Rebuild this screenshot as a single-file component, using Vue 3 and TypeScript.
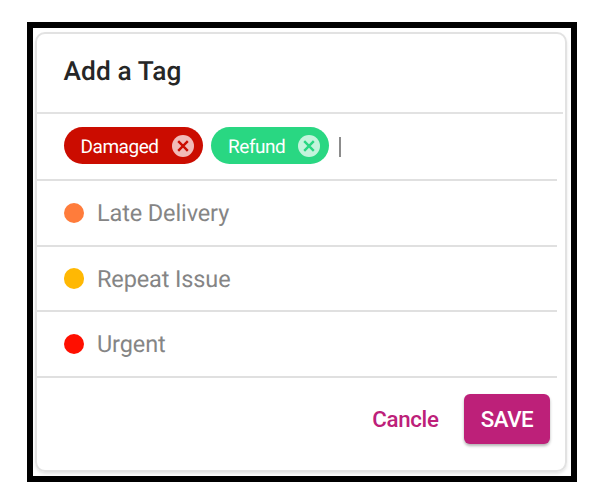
<script setup lang="ts">
interface Tag {
  label: string
  tone: string
}

const selected: Tag[] = [
  { label: 'Damaged', tone: 'damaged' },
  { label: 'Refund', tone: 'refund' },
]

const options: Tag[] = [
  { label: 'Late Delivery', tone: 'late' },
  { label: 'Repeat Issue', tone: 'repeat' },
  { label: 'Urgent', tone: 'urgent' },
]
</script>

<template>
  <main class="page">
    <div class="frame">
      <section class="card">
        <h1 class="title"><span>Add a Tag</span></h1>
        <div class="chips">
          <span v-for="tag in selected" :key="tag.label" class="chip" :class="tag.tone">
            <span class="chip-label">{{ tag.label }}</span>
            <svg class="remove" viewBox="0 0 22 22">
              <circle cx="11" cy="11" r="11" />
              <path d="M6.2 6.2 15.8 15.8M15.8 6.2 6.2 15.8" />
            </svg>
          </span>
          <i class="caret"></i>
        </div>
        <ul class="options">
          <li v-for="tag in options" :key="tag.label" class="option" :class="tag.tone">
            <i class="dot"></i>
            <span>{{ tag.label }}</span>
          </li>
        </ul>
        <footer class="actions">
          <button class="cancel" type="button">Cancle</button>
          <button class="save" type="button">SAVE</button>
        </footer>
      </section>
    </div>
  </main>
</template>

<style>
body {
  background: #fff;
}
</style>

<style scoped>
.page {
  box-sizing: border-box;
  width: 600px;
  height: 504px;
  padding: 22px 23px 0 27px;
  font-family: Roboto, 'Liberation Sans', sans-serif;
  text-rendering: geometricPrecision;
}
.frame {
  box-sizing: border-box;
  height: 460px;
  padding: 4px 4px 4px 2px;
  border: 6px solid #000;
}
.card {
  box-sizing: border-box;
  height: 440px;
  border: 2px solid #e2e2e2;
  border-radius: 10px;
  box-shadow: 0 2px 3px rgba(0, 0, 0, 0.1);
}
.title {
  box-sizing: border-box;
  display: flex;
  align-items: center;
  height: 80px;
  margin: 0 2px 0 0;
  padding: 0 0 2px 26.5px;
  border-bottom: 2px solid #e2e2e2;
  color: #262626;
  font-size: 26.3px;
  font-weight: 500;
  letter-spacing: 0.1px;
}
.chips {
  box-sizing: border-box;
  display: flex;
  align-items: center;
  gap: 8px;
  height: 67px;
  margin-right: 8px;
  padding: 0 0 2px 26.5px;
  border-bottom: 2px solid #e0e0e0;
}
.chip {
  box-sizing: border-box;
  display: flex;
  align-items: center;
  justify-content: space-between;
  height: 37px;
  padding: 0 9px 0 17px;
  border-radius: 19px;
  color: #fff;
  font-size: 19px;
}
.chip.damaged {
  width: 139.5px;
  background: #cb0c00;
}
.chip.refund {
  width: 118px;
  background: #29d782;
}
.chip-label {
  padding-top: 1px;
  letter-spacing: -0.45px;
}
.remove {
  width: 22px;
  height: 22px;
}
.remove circle {
  fill: #fff;
  fill-opacity: 0.72;
}
.remove path {
  fill: none;
  stroke: #cb0c00;
  stroke-width: 2.4;
}
.refund .remove path {
  stroke: #29d782;
}
.caret {
  width: 2px;
  height: 20px;
  margin: 2px 0 0 2px;
  background: #8c8c8c;
}
.options {
  margin: 0;
  padding: 0;
  list-style: none;
}
.option {
  box-sizing: border-box;
  display: flex;
  align-items: center;
  gap: 13px;
  height: 65.5px;
  margin-right: 8px;
  padding-left: 26.5px;
  border-bottom: 2px solid #e0e0e0;
  color: #858585;
  font-size: 23.5px;
  letter-spacing: -0.12px;
}
.option span {
  padding-top: 1px;
}
.dot {
  width: 20.5px;
  height: 20.5px;
  border-radius: 50%;
}
.late .dot {
  background: #ff7c3b;
}
.repeat .dot {
  background: #ffb803;
}
.urgent .dot {
  background: #ff0f00;
}
.actions {
  display: flex;
  align-items: center;
  justify-content: flex-end;
  gap: 25.5px;
  padding: 16px 15px 0 0;
}
button {
  border: 0;
  padding: 0;
  font: inherit;
  font-weight: 500;
}
.cancel {
  background: none;
  color: #bd2079;
  font-size: 22.3px;
  letter-spacing: -0.35px;
}
.save {
  width: 86px;
  height: 50px;
  border-radius: 6px;
  background: #bd2079;
  box-shadow: 0 2px 3px rgba(0, 0, 0, 0.3);
  color: #fff;
  font-size: 22.3px;
  letter-spacing: -0.5px;
}
</style>
